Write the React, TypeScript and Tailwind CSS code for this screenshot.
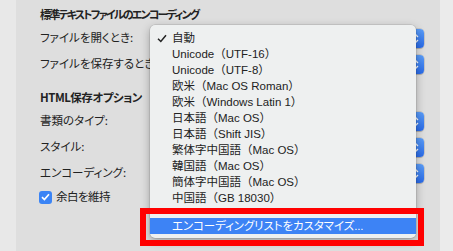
import { ReactNode } from 'react'

function Popup() {
  return (
    <div className="flex h-[19px] flex-1 rounded-[4px] bg-white shadow-[0_0_0_0.5px_rgba(0,0,0,0.2),0_1px_1px_rgba(0,0,0,0.15)]">
      <div className="flex-1" />
      <div className="flex w-[17px] items-center justify-center rounded-r-[4px] bg-gradient-to-b from-[#5a9cf8] to-[#2a6ae8]">
        <svg width="7" height="11" viewBox="0 0 7 11" fill="none" stroke="white" strokeWidth="1.3">
          <polyline points="1,4 3.5,1.5 6,4" />
          <polyline points="1,7 3.5,9.5 6,7" />
        </svg>
      </div>
    </div>
  )
}

function Row({ label, className = '' }: { label: string; className?: string }) {
  return (
    <div className={`flex h-[26px] items-center ${className}`}>
      <div className="w-[120px] whitespace-nowrap">{label}</div>
      <Popup />
    </div>
  )
}

function MenuItem({ children, checked }: { children: ReactNode; checked?: boolean }) {
  return (
    <div className="flex h-[16px] items-center leading-[16px]">
      <div className="flex w-[22px] justify-center pl-[2px]">
        {checked && (
          <svg width="10" height="9" viewBox="0 0 10 9" fill="none" stroke="#222" strokeWidth="1.5">
            <polyline points="1,4.8 3.8,7.5 9,1.2" />
          </svg>
        )}
      </div>
      <span className="whitespace-nowrap">{children}</span>
    </div>
  )
}

const encodings = [
  'Unicode（UTF-16）',
  'Unicode（UTF-8）',
  '欧米（Mac OS Roman）',
  '欧米（Windows Latin 1）',
  '日本語（Mac OS）',
  '日本語（Shift JIS）',
  '繁体字中国語（Mac OS）',
  '韓国語（Mac OS）',
  '簡体字中国語（Mac OS）',
  '中国語（GB 18030）',
]

export default function App() {
  return (
    <div className="relative flex h-[251px] w-[453px] overflow-hidden font-['Noto_Sans_CJK_JP',sans-serif] leading-none text-[#222]">
      <div className="w-[16px] bg-[#e8e8e8]" />

      {/* 設定パネル */}
      <div className="flex flex-1 flex-col bg-[#dedede] pl-[24px] pr-[16px] text-[11.5px] [font-feature-settings:'palt']">
        <div className="mt-[4px] flex h-[20px] items-center whitespace-nowrap text-[11px] font-bold tracking-[-1.8px]">標準テキストファイルのエンコーディング</div>
        <Row label="ファイルを開くとき:" className="mt-[1px]" />
        <Row label="ファイルを保存するとき:" />
        <div className="mt-[11px] flex h-[20px] items-center font-bold tracking-[-0.5px]">HTML保存オプション</div>
        <Row label="書類のタイプ:" />
        <Row label="スタイル:" />
        <Row label="エンコーディング:" />
        <div className="flex h-[22px] items-center">
          <div className="ml-[-1px] flex h-[13px] w-[13px] items-center justify-center rounded-[3px] bg-[#3b84f5]">
            <svg width="9" height="8" viewBox="0 0 9 8" fill="none" stroke="white" strokeWidth="1.7">
              <polyline points="1,4.2 3.4,6.6 8,1.2" />
            </svg>
          </div>
          <span className="ml-[4px] tracking-[-0.5px]">余白を維持</span>
        </div>
      </div>

      <div className="w-[13px] bg-[#ebebeb]" />

      {/* ポップアップメニュー */}
      <div className="absolute left-[150px] top-[25px] flex h-[213px] w-[266px] flex-col rounded-[5px] bg-[#eef0f0] pt-[5px] font-['Liberation_Sans','Noto_Sans_CJK_JP',sans-serif] text-[11.5px] shadow-[0_0_0_0.5px_rgba(0,0,0,0.15),0_3px_10px_rgba(0,0,0,0.3)]">
        <MenuItem checked>自動</MenuItem>
        {encodings.map(e => (
          <MenuItem key={e}>{e}</MenuItem>
        ))}
        <div className="my-[5px] h-px bg-[#d4d6d6]" />
        <div className="mt-px flex h-[16px] items-center bg-[#3d83f5] pl-[22px] leading-[16px] tracking-[-0.1px] text-white [font-feature-settings:'palt']">
          エンコーディングリストをカスタマイズ...
        </div>
      </div>

      {/* 注記の枠 */}
      <div className="absolute left-[140px] top-[208px] h-[38px] w-[284px] border-[6px] border-[#ff0000]" />
    </div>
  )
}
